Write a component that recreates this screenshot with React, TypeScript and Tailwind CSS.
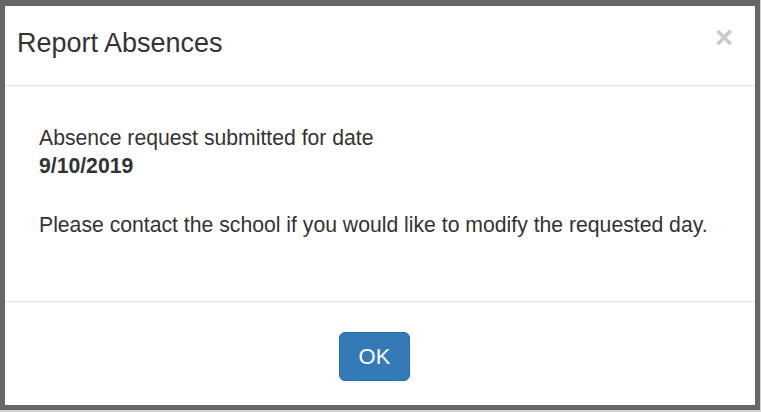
/**
 * Report Absences — confirmation modal
 */
export default function App() {
    return (
        <div
            className="w-[761px] h-[412px] bg-[#d4d4d4] pr-px pb-[2px]"
            style={{ fontFamily: '"Liberation Sans", Arial, sans-serif' }}
        >
            <div className="w-full h-full flex flex-col bg-white border-[#666666] border-l-[5px] border-r-[5px] border-t-[6px] border-b-[5px] text-[#333333]">
                {/* ── Header ─────────────────────────────────── */}
                <div className="h-[80px] shrink-0 flex items-start justify-between border-b border-[#e5e5e5] pl-[12px] pr-[22px] pt-[18px]">
                    <h4 className="text-[27px] leading-[38px] font-normal">Report Absences</h4>
                    <button className="text-[31px] leading-[30px] font-bold text-[#c9c9c9] mt-[-1px]">×</button>
                </div>

                {/* ── Body ───────────────────────────────────── */}
                <div className="h-[216px] shrink-0 border-b border-[#e5e5e5] pl-[34px] pt-[38px] text-[21.2px] leading-[28px]">
                    <p>Absence request submitted for date</p>
                    <p className="font-bold">9/10/2019</p>
                    <p className="mt-[31px]">Please contact the school if you would like to modify the requested day.</p>
                </div>

                {/* ── Footer ─────────────────────────────────── */}
                <div className="flex-1 flex justify-center items-start pt-[30px] pr-[11px]">
                    <button className="w-[71px] h-[49px] rounded-[6px] bg-[#337ab7] border border-[#2e6da4] text-white text-[22px] leading-[28px]">
                        OK
                    </button>
                </div>
            </div>
        </div>
    );
}
